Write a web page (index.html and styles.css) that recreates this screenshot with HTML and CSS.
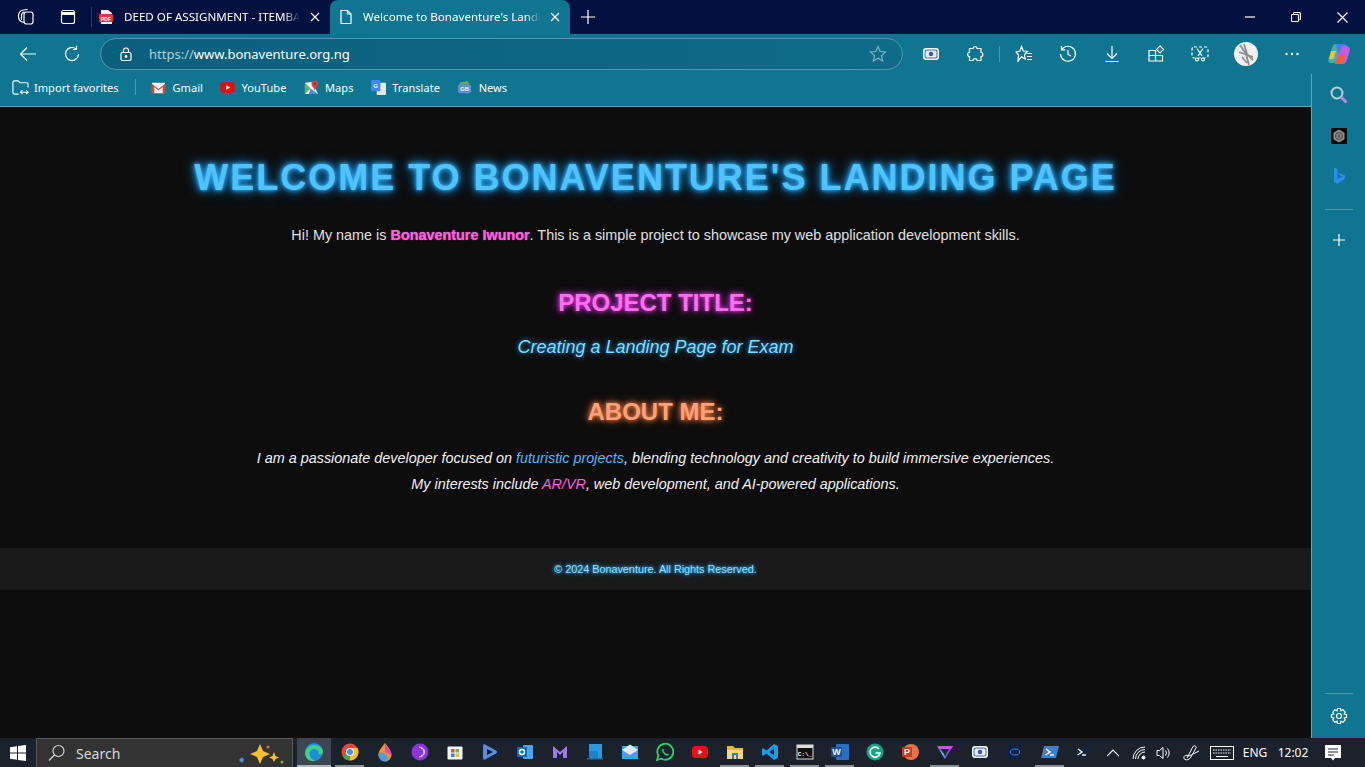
FILE: index.html
```html
<!DOCTYPE html>
<html lang="en">
<head>
<meta charset="utf-8">
<title>Welcome to Bonaventure's Landing Page</title>
<link rel="stylesheet" href="styles.css">
</head>
<body>
<div class="window">
  <header class="tabstrip">
    <span class="strip-btn first"><svg class="ic i18" viewBox="0 0 18 18"><rect x="7" y="4" width="9" height="12" rx="2.500"/><path d="M7 14.500C3.500 14 1.500 11.500 1.500 8C1.500 5 3.500 2.500 6.500 2L10.500 1.500"/><path d="M4.500 12V7.500C4.500 5.500 5.500 4.500 7.500 4"/></svg></span>
    <span class="strip-btn second"><svg class="ic i18" viewBox="0 0 18 18"><rect x="2.500" y="2.500" width="13" height="13" rx="2"/><path d="M2.500 5.500H15.500" stroke-width="3"/></svg></span>
    <span class="strip-sep"></span>
    <div class="tab">
      <svg class="fav16" viewBox="0 0 16 16"><path d="M3 1H10L14 4V15H3Z" fill="#f2f2f2"/><rect x="1" y="5" width="14" height="8" rx="1" fill="#e5333f"/><text x="8" y="11.500" class="pdf-txt" text-anchor="middle">PDF</text></svg>
      <span class="tab-title">DEED OF ASSIGNMENT - ITEMBA DEED</span>
      <svg class="ic i10" viewBox="0 0 10 10"><path d="M1 1L9 9M9 1L1 9"/></svg>
    </div>
    <div class="tab active">
      <svg class="ic i16" viewBox="0 0 16 16"><path d="M3 1.500H9.500L13 5V14.500H3ZM9.500 1.500V5H13"/></svg>
      <span class="tab-title">Welcome to Bonaventure's Landing Page</span>
      <svg class="ic i10" viewBox="0 0 10 10"><path d="M1 1L9 9M9 1L1 9"/></svg>
    </div>
    <span class="new-tab"><svg class="ic i14" viewBox="0 0 14 14"><path d="M7 0V14M0 7H14"/></svg></span>
    <div class="win-ctrl">
      <span class="ctl"><svg class="ic i10" viewBox="0 0 10 10"><path d="M0 5H10"/></svg></span>
      <span class="ctl"><svg class="ic i10" viewBox="0 0 10 10"><rect x="0.500" y="2.500" width="7" height="7" rx="1"/><path d="M2.500 2.500V1.500C2.500 1 3 .5 3.500 .5H8C9 .5 9.500 1 9.500 2V6.500C9.500 7 9 7.500 8.500 7.500"/></svg></span>
      <span class="ctl"><svg class="ic i11" viewBox="0 0 11 11"><path d="M.5 .5L10.500 10.500M10.500 .5L.5 10.500"/></svg></span>
    </div>
  </header>

  <nav class="toolbar">
    <span class="tb-nav"><svg class="ic i18" viewBox="0 0 18 18"><path d="M17 9H1.500M8 2.500L1.500 9L8 15.500"/></svg></span>
    <span class="tb-nav"><svg class="ic i18" viewBox="0 0 18 18"><path d="M15.500 9A6.500 6.500 0 1 1 13 3.900M13.500 .8V4.500H9.800"/></svg></span>
    <div class="address">
      <svg class="ic i14" viewBox="0 0 14 14"><rect x="2" y="5.500" width="10" height="8" rx="1.500"/><path d="M4.500 5.500V3.500A2.500 2.500 0 0 1 9.500 3.500V5.500"/><circle cx="7" cy="9.500" r=".8"/></svg>
      <span class="url"><span class="url-dim">https://</span>www.bonaventure.org.ng</span>
      <svg class="ic i18 star" viewBox="0 0 18 18"><path d="M9 1.500L11.200 6.500L16.500 7L12.500 10.600L13.700 16L9 13.200L4.300 16L5.500 10.600L1.500 7L6.800 6.500Z"/></svg>
    </div>
    <div class="tools">
      <span class="tool"><svg class="i18" viewBox="0 0 18 18"><rect x="1" y="3" width="16" height="12" rx="3" fill="#fff"/><rect x="2.500" y="4.500" width="13" height="9" rx="2" fill="#2f6fd8"/><rect x="3.500" y="5.500" width="11" height="7" rx="1.500" fill="#e8eefc"/><circle cx="9" cy="9" r="2.200" fill="#3c4fc0"/></svg></span>
      <span class="tool"><svg class="ic i18" viewBox="0 0 18 18"><path d="M7 3.500C7 1 11 1 11 3.500H15V7.500C17.500 7.500 17.500 11.500 15 11.500V15.500H11C11 13 7 13 7 15.500H3.500V11.500C1 11.500 1 7.500 3.500 7.500V3.500Z"/></svg></span>
      <span class="tool-sep"></span>
      <span class="tool"><svg class="ic i18" viewBox="0 0 18 18"><path d="M6.500 1.500L8.300 6L12.500 6.500L9.500 9.500L10.300 14L6.500 11.800L3 16L3.500 10L1 7L5 6Z"/><path d="M12 8.500H17M12 11.500H17M12 14.500H17"/></svg></span>
      <span class="tool"><svg class="ic i18" viewBox="0 0 18 18"><path d="M2.800 4.500A7.500 7.500 0 1 1 1.500 9M2.500 1V4.800H6.300M9 5V9.500L12 11"/></svg></span>
      <span class="tool"><svg class="ic i18" viewBox="0 0 18 18"><path d="M9 1V13M4 8.500L9 13.500L14 8.500M2.500 16.500H15.500"/></svg></span>
      <span class="tool"><svg class="ic i18" viewBox="0 0 18 18"><path d="M2 5.500H8.500V16H2ZM8.500 10.500H15.500V16H8.500ZM2 10.500H8.500"/><path d="M13 1L16.500 4.500L13 8L9.500 4.500Z"/></svg></span>
      <span class="tool"><svg class="ic i18 dash" viewBox="0 0 18 18"><rect x="1" y="2" width="16" height="11" rx="2"/><path class="solid" d="M6 3.500L11 11M12 3.500L7 11"/><circle class="solid" cx="6" cy="14.500" r="1.500"/><circle class="solid" cx="12" cy="14.500" r="1.500"/></svg></span>
      <span class="tool avatar-wrap"><svg class="avatar" viewBox="0 0 24 24"><circle cx="12" cy="12" r="12" fill="#f0f0f0"/><path d="M6 3L12 12L15 23M10 2L13 12L19 18M5 10L19 15M8 15L13 21" stroke="#8f8f8f" stroke-width="1.800" fill="none"/></svg></span>
      <span class="tool"><svg class="i18" viewBox="0 0 18 18"><circle cx="3.500" cy="9" r="1.200" fill="#fff"/><circle cx="9" cy="9" r="1.200" fill="#fff"/><circle cx="14.500" cy="9" r="1.200" fill="#fff"/></svg></span>
      <span class="tool copilot"><svg class="i24" viewBox="0 0 24 24"><path d="M9 2H15L10 18C9.500 20 8 21 6 21H4C2 21 1 19.500 1.500 17.500L5 6C5.700 3.500 7 2 9 2Z" fill="#3fb5a5"/><path d="M9 2H17C19 2 20 3 19.500 5L17 12H11Z" fill="#3f7fe8"/><path d="M15 4H19C21.500 4 23.500 6 22.800 8.500L20 18C19.400 20.500 17.500 22 15.500 22H8L11 13Z" fill="#c65be0"/><path d="M11 13H19L16.500 20C16 21.500 15 22 13.500 22H8Z" fill="#f2603a"/><path d="M4 9H9L6.500 17H2Z" fill="#e9c23a"/></svg></span>
    </div>
  </nav>

  <div class="body-row">
    <div class="left-col">
      <div class="favbar">
        <span class="fav import"><svg class="ic i18 fav-import" viewBox="0 0 18 18"><path d="M7 16H3A2 2 0 0 1 1 14V3.500A1.500 1.500 0 0 1 2.500 2H6.500L8.500 4H15.500A1.500 1.500 0 0 1 17 5.500V9"/><path d="M9 14H17M11 12L9 14L11 16M15 12L17 14L15 16"/></svg>Import favorites</span>
        <span class="fav-sep"></span>
        <span class="fav"><svg class="i15" viewBox="0 0 16 16"><rect x="1" y="3" width="14" height="11" rx="1" fill="#f3f3f3"/><path d="M1 4L8 9.500L15 4V14H12.500V7.500L8 11L3.500 7.500V14H1Z" fill="#d9453a"/></svg>Gmail</span>
        <span class="fav"><svg class="i15" viewBox="0 0 16 16"><rect x="0.500" y="2.500" width="15" height="11" rx="3" fill="#f00"/><path d="M6.500 5.500L11 8L6.500 10.500Z" fill="#fff"/></svg>YouTube</span>
        <span class="fav"><svg class="i15" viewBox="0 0 16 16"><path d="M1 3L9 2L15 15H1Z" fill="#f2f2f2"/><path d="M1 3L7 9L1 15Z" fill="#5cb85c"/><path d="M7 9L15 15H5Z" fill="#4a90e2"/><circle cx="11.500" cy="4" r="3.500" fill="#db4437"/><circle cx="11.500" cy="4" r="1.200" fill="#7d1f18"/><path d="M9 6L11.500 11L14 6Z" fill="#db4437"/></svg>Maps</span>
        <span class="fav"><svg class="i15" viewBox="0 0 16 16"><rect x="6" y="3" width="10" height="13" rx="1" fill="#e8e8e8"/><rect x="0" y="0" width="10" height="12" rx="1" fill="#4285f4"/><text x="5" y="9" class="mini-txt" text-anchor="middle">G</text></svg>Translate</span>
        <span class="fav"><svg class="i15" viewBox="0 0 16 16"><path d="M3 3L11 1L14 5H2Z" fill="#6aa84f"/><rect x="1" y="5" width="14" height="9" rx="2" fill="#5b8fd9"/><text x="8" y="12" class="mini-txt" text-anchor="middle">GB</text></svg>News</span>
      </div>
      <main class="page">
        <h1 class="hero">Welcome to Bonaventure's Landing Page</h1>
        <p class="intro">Hi! My name is <strong class="pink">Bonaventure Iwunor</strong>. This is a simple project to showcase my web application development skills.</p>
        <h2 class="project-h">Project Title:</h2>
        <p class="project-t">Creating a Landing Page for Exam</p>
        <h2 class="about-h">About Me:</h2>
        <p class="about-t">I am a passionate developer focused on <span class="blue">futuristic projects</span>, blending technology and creativity to build immersive experiences.<br>My interests include <span class="pink-i">AR/VR</span>, web development, and AI-powered applications.</p>
        <footer class="foot">© 2024 Bonaventure. All Rights Reserved.</footer>
      </main>
    </div>
    <aside class="sidebar">
      <div class="side-top">
        <span class="side-i"><svg class="i20" viewBox="0 0 20 20"><circle cx="8" cy="8" r="5.500" fill="none" stroke="#bcd0d6" stroke-width="2"/><path d="M12 12L17.500 17.500" stroke="#b78ae8" stroke-width="3"/></svg></span>
        <span class="side-i"><svg class="i20" viewBox="0 0 20 20"><rect x="2" y="2" width="16" height="16" fill="#0a0a0a"/><path d="M10 3.500L15.500 6.700V13.300L10 16.500L4.500 13.300V6.700Z" fill="#8d8d8d"/><circle cx="10" cy="10" r="3.500" fill="none" stroke="#444" stroke-width="1"/><circle cx="10" cy="10" r="1.500" fill="#555"/></svg></span>
        <span class="side-i"><svg class="i20" viewBox="0 0 20 20"><path d="M5 1.500L8.500 3V13L13 10.500L10.500 9.200L9.500 6.500L16 9.500V12.500L8.500 18L5 16Z" fill="#2b8cf0"/></svg></span>
        <span class="side-rule"></span>
        <span class="side-i plus"><svg class="ic i12" viewBox="0 0 12 12"><path d="M6 0V12M0 6H12"/></svg></span>
      </div>
      <div class="side-bottom">
        <span class="side-rule"></span>
        <span class="side-i"><svg class="ic i18" viewBox="0 0 18 18"><path d="M7.500 1.500H10.500L11 3.800L13 2.800L15.200 5L14.200 7L16.500 7.500V10.500L14.200 11L15.200 13L13 15.200L11 14.200L10.500 16.500H7.500L7 14.200L5 15.200L2.800 13L3.800 11L1.500 10.500V7.500L3.800 7L2.800 5L5 2.800L7 3.800Z"/><circle cx="9" cy="9" r="2.500"/></svg></span>
      </div>
    </aside>
  </div>

  <footer class="taskbar">
    <span class="start"><svg class="i18" viewBox="0 0 18 18"><path d="M1 3.200L8 2.200V8.500H1ZM9 2L17 1V8.500H9ZM1 9.500H8V15.800L1 14.800ZM9 9.500H17V17L9 16Z" fill="#fff"/></svg></span>
    <div class="search"><svg class="ic i18" viewBox="0 0 18 18"><circle cx="10.500" cy="7" r="5.500"/><path d="M6.500 11L1 16.500"/></svg><span>Search</span>
      <svg class="sparkle" viewBox="0 0 46 22"><path d="M22 2L25 9L32 12L25 15L22 22L19 15L12 12L19 9Z" fill="#f5c12e"/><path d="M36 10L37.500 14L41 15.500L37.500 17L36 20L34.500 17L31 15.500L34.500 14Z" fill="#f5c12e"/><path d="M4 15L6 18L4 21L1 18Z" fill="#3b9ad9"/><circle cx="30" cy="5" r="1.500" fill="#d9734a"/><circle cx="44" cy="20" r="1.500" fill="#7fb04a"/></svg>
    </div>
    <div class="apps">
      <span class="app on"><svg class="i20" viewBox="0 0 20 20"><circle cx="10" cy="10" r="9" fill="#1b8fd6"/><path d="M1 11C2 6 6 3 10 3C15 3 19 6 19 10C19 12 16 13 14 12C16 9 13 7 10 7C6 7 4 12 7 16C8 18 11 19 13 18.500C7 21 1 17 1 11Z" fill="#3fd08a"/></svg></span>
      <span class="app run"><svg class="i18" viewBox="0 0 18 18"><circle cx="9" cy="9" r="8.500" fill="#e6453a"/><path d="M9 9L1.500 13A8.500 8.500 0 0 0 9 17.500Z" fill="#3aa757"/><path d="M9 9L9 17.500A8.500 8.500 0 0 0 16.500 5H9Z" fill="#fbc02d"/><circle cx="9" cy="9" r="4" fill="#fff"/><circle cx="9" cy="9" r="3" fill="#4a8df0"/></svg></span>
      <span class="app"><svg class="i20" viewBox="0 0 20 20"><path d="M10 1C14 6 16.500 9 16.500 13A6.500 6.500 0 0 1 3.500 13C3.500 9 6 6 10 1Z" fill="#f09030"/><path d="M3.500 13C3.500 10 6 10 10 12C13 14 14 17 12 19A6.500 6.500 0 0 1 3.500 13Z" fill="#4a9de8"/><path d="M10 1C13 6 16.500 9 16.500 13L10 10Z" fill="#d84fb0"/></svg></span>
      <span class="app"><svg class="i18" viewBox="0 0 18 18"><circle cx="9" cy="9" r="8.500" fill="#8a35d8"/><path d="M8 4A5 5 0 0 1 8 14M10 5.500A3.500 3.500 0 0 1 10 12.500" fill="none" stroke="#e5c8f8" stroke-width="1.200"/></svg></span>
      <span class="app"><svg class="i18" viewBox="0 0 18 18"><rect x="1.500" y="3.500" width="15" height="13" rx="1" fill="#f5f5f5"/><rect x="5" y="6" width="3.500" height="3.500" fill="#e8503a"/><rect x="9.500" y="6" width="3.500" height="3.500" fill="#7cb342"/><rect x="5" y="10.500" width="3.500" height="3.500" fill="#2b8ae0"/><rect x="9.500" y="10.500" width="3.500" height="3.500" fill="#f5b82e"/></svg></span>
      <span class="app"><svg class="i18" viewBox="0 0 18 18"><path d="M4 1.500L15 7.500C16.500 8.500 16.500 9.500 15 10.500L4 16.500C3 17 2 16.500 2 15V3C2 1.500 3 1 4 1.500Z" fill="#5a8ee0"/><path d="M6 6L12 9L6 12Z" fill="#10182a"/></svg></span>
      <span class="app"><svg class="i18" viewBox="0 0 18 18"><rect x="7" y="2" width="10" height="14" rx="1" fill="#4aa8e8"/><rect x="1" y="4" width="10" height="10" rx="1" fill="#0f6cbd"/><circle cx="6" cy="9" r="2.500" fill="none" stroke="#fff" stroke-width="1.400"/></svg></span>
      <span class="app"><svg class="i18" viewBox="0 0 18 18"><path d="M2 3L9 9L16 3V15H12V9L9 12L6 9V15H2Z" fill="#9b7be8"/></svg></span>
      <span class="app"><svg class="i18" viewBox="0 0 18 18"><rect x="3" y="1" width="13" height="14" fill="#2a9be0"/><rect x="1" y="15" width="16" height="1.500" fill="#1c6eb0"/><rect x="3" y="8" width="9" height="7" fill="#1a82c8"/></svg></span>
      <span class="app"><svg class="i18" viewBox="0 0 18 18"><rect x="1" y="3" width="16" height="13" fill="#3ba4e8"/><path d="M1 7L9 1.500L17 7L9 12Z" fill="#d8ecfa"/></svg></span>
      <span class="app"><svg class="i18" viewBox="0 0 18 18"><path d="M1 17L2.300 12.500A8 8 0 1 1 5.500 15.700Z" fill="none" stroke="#25d366" stroke-width="1.800"/><path d="M6.500 5.500C5.500 7 6 9 8 11C10 13 12 13 13 12L11.500 10.500L10.500 11C9.500 10.500 8 9 7.500 8L8 7Z" fill="#25d366"/></svg></span>
      <span class="app"><svg class="i18" viewBox="0 0 18 18"><rect x="1" y="3" width="16" height="12" rx="3.500" fill="#e8101a"/><path d="M7.500 6.500L11.500 9L7.500 11.500Z" fill="#fff"/></svg></span>
      <span class="app run"><svg class="i18" viewBox="0 0 18 18"><path d="M1 3H7L9 5H17V16H1Z" fill="#e8b838"/><rect x="1" y="7" width="16" height="9" fill="#f5d878"/><rect x="6" y="10" width="6" height="6" fill="#3a78c8"/><rect x="8" y="12" width="2" height="4" fill="#f5d878"/></svg></span>
      <span class="app run"><svg class="i18" viewBox="0 0 18 18"><path d="M13 1L17 3V15L13 17L5.500 10.500L2 13L1 12V6L2 5L5.500 7.500ZM13 5.500L8.500 9L13 12.500Z" fill="#1d9be8"/></svg></span>
      <span class="app run"><svg class="i18" viewBox="0 0 18 18"><rect x="1" y="2" width="16" height="14" fill="#111" stroke="#ddd" stroke-width="1"/><rect x="1" y="2" width="16" height="3" fill="#ddd"/><text x="9" y="13" class="cmd-txt" text-anchor="middle">C:\_</text></svg></span>
      <span class="app run"><svg class="i18" viewBox="0 0 18 18"><rect x="5" y="1" width="13" height="16" rx="1" fill="#2b6fc4"/><rect x="0" y="4" width="11" height="10" rx="1" fill="#1a4fa0"/><text x="5.500" y="12" class="mini-txt big" text-anchor="middle">W</text></svg></span>
      <span class="app"><svg class="i18" viewBox="0 0 18 18"><circle cx="9" cy="9" r="8.500" fill="#11a683"/><path d="M13 6A5 5 0 1 0 14 10H9.500" fill="none" stroke="#fff" stroke-width="1.600"/></svg></span>
      <span class="app"><svg class="i18" viewBox="0 0 18 18"><circle cx="10" cy="9" r="8" fill="#e8734a"/><rect x="1" y="4" width="10" height="10" rx="1" fill="#c43e1c"/><text x="6" y="12" class="mini-txt big" text-anchor="middle">P</text></svg></span>
      <span class="app run"><svg class="i18" viewBox="0 0 18 18"><path d="M1 3H17L9 16Z" fill="#7b4fe0"/><path d="M5 6H13L9 13Z" fill="#1d2530"/><path d="M1 3H17L15 6H3Z" fill="#c05be0"/><path d="M3 6L9 16L8 11Z" fill="#3fd0c8"/></svg></span>
      <span class="app"><svg class="i18" viewBox="0 0 18 18"><rect x="1" y="3" width="16" height="12" rx="3" fill="#fff"/><rect x="2.500" y="4.500" width="13" height="9" rx="2" fill="#2f6fd8"/><rect x="3.500" y="5.500" width="11" height="7" rx="1.500" fill="#e8eefc"/><circle cx="9" cy="9" r="2.200" fill="#3c4fc0"/></svg></span>
      <span class="app"><svg class="i18" viewBox="0 0 18 18"><rect x="2" y="2" width="14" height="14" rx="3" fill="#0a2148"/><ellipse cx="9" cy="9" rx="4.500" ry="3" fill="none" stroke="#2f8fd8" stroke-width="1"/></svg></span>
      <span class="app run"><svg class="i18" viewBox="0 0 18 18"><path d="M3 3H18L15 15H0Z" fill="#3f7fd0"/><path d="M5 6L9 9L4.500 12" fill="none" stroke="#fff" stroke-width="1.400"/><path d="M9 12H13" stroke="#fff" stroke-width="1.400"/></svg></span>
      <span class="app narrow"><svg class="i18" viewBox="0 0 18 18"><path d="M3 3H18L15 15H0Z" fill="#16243a"/><path d="M5 6L9 9L4.500 12" fill="none" stroke="#fff" stroke-width="1.400"/><path d="M9 12H13" stroke="#fff" stroke-width="1.400"/></svg></span>
    </div>
    <div class="tray">
      <span class="tray-i w-chev"><svg class="ic i12" viewBox="0 0 12 12"><path d="M0 9L6 3L12 9"/></svg></span>
      <span class="tray-i w-wifi"><svg class="ic i14 thin" viewBox="0 0 14 14"><path d="M1 13A12 12 0 0 1 13 1M3.500 13A9.500 9.500 0 0 1 13 3.500M6 13A7 7 0 0 1 13 6"/><circle cx="11.500" cy="11.500" r="1.500" fill="#fff"/></svg></span>
      <span class="tray-i w-vol"><svg class="ic i16 thin" viewBox="0 0 16 16"><path d="M1 5.500H3.500L7 2.500V13.500L3.500 10.500H1ZM9.500 5.500A4 4 0 0 1 9.500 10.500M11.500 3.500A7 7 0 0 1 11.500 12.500"/></svg></span>
      <span class="tray-i w-pen"><svg class="ic i18 thin" viewBox="0 0 18 18"><path d="M5 14L11 2.500C12 1 14.500 2 14 4L9 13C7.500 15.500 5 16.500 3 15.500C.5 14 2.500 10.500 5 11.500C7 12.500 9 11 11 10L17 7"/></svg></span>
      <span class="tray-i w-kbd"><svg class="i24" viewBox="0 0 24 14"><rect x=".5" y=".5" width="23" height="13" fill="none" stroke="#fff"/><path d="M3 4H21M3 7H21" stroke="#fff" stroke-dasharray="1.500 1"/><path d="M6 10.500H18" stroke="#fff"/></svg></span>
      <span class="tray-t w-eng">ENG</span>
      <span class="tray-t w-time">12:02</span>
      <span class="tray-i w-note"><svg class="i18" viewBox="0 0 18 18"><path d="M1 1H17V14H11L9 16.500L7 14H1Z" fill="#fff"/><path d="M4 5H14M4 8H14M4 11H10" stroke="#1a2129"/></svg></span>
    </div>
  </footer>
</div>
</body>
</html>
```

FILE: styles.css
```css
* { box-sizing: border-box; }
html, body { margin: 0; height: 100%; overflow: hidden; background: #0d0d0d; }
.window { display: flex; flex-direction: column; width: 1365px; height: 767px; font-family: "Noto Sans", sans-serif; color: #fff; }

.ic { fill: none; stroke: currentColor; stroke-width: 1.2; flex: none; }
.thin { stroke-width: 1; }
.i10 { width: 10px; height: 10px; flex: none; }
.i11 { width: 11px; height: 11px; flex: none; }
.i12 { width: 12px; height: 12px; flex: none; }
.i14 { width: 14px; height: 14px; flex: none; }
.i15 { width: 15px; height: 15px; flex: none; }
.i16 { width: 16px; height: 16px; flex: none; }
.i18 { width: 18px; height: 18px; flex: none; }
.i20 { width: 20px; height: 20px; flex: none; }
.i24 { width: 24px; height: 24px; flex: none; }
.fav16 { width: 16px; height: 16px; flex: none; }
.pdf-txt { font: 700 5px "Liberation Sans", sans-serif; fill: #fff; }
.mini-txt { font: 700 6px "Liberation Sans", sans-serif; fill: #fff; }
.mini-txt.big { font-size: 9px; }
.cmd-txt { font: 700 6px "Liberation Mono", monospace; fill: #fff; }

.tabstrip { display: flex; align-items: center; height: 34px; flex: none; background: #02113f; }
.strip-btn { display: flex; justify-content: center; }
.strip-btn.first { width: 47px; margin-left: 2px; margin-right: 1px; }
.strip-btn.second { width: 36px; margin-right: 5px; }
.strip-sep { width: 1px; height: 20px; background: #2b3a66; margin-right: 5px; }
.tab { display: flex; align-items: center; gap: 10px; width: 233px; height: 34px; padding: 0 10px 0 1px; font-size: 11.6px; }
.tab.active { background: #0f7591; border-radius: 8px 8px 0 0; width: 240px; padding: 0 10px 0 8px; gap: 9px; }
.tab-title { flex: 1; min-width: 0; white-space: nowrap; overflow: hidden; padding-bottom: 1px; -webkit-mask-image: linear-gradient(90deg, #000 91%, transparent); mask-image: linear-gradient(90deg, #000 91%, transparent); }
.new-tab { width: 36px; display: flex; justify-content: center; }
.win-ctrl { margin-left: auto; display: flex; }
.ctl { width: 46px; display: flex; justify-content: center; }

.toolbar { display: flex; align-items: center; height: 40px; flex: none; background: #0f7591; padding-left: 6px; }
.tb-nav { width: 44px; display: flex; justify-content: center; }
.address { display: flex; align-items: center; gap: 16px; width: 803px; height: 32px; margin-left: 6px; padding: 0 15px 0 18px; border: 1px solid #4f97ac; border-radius: 16px; background: linear-gradient(90deg, #0b5f7c, #0e6c89); }
.url { flex: 1; font-size: 13px; }
.url-dim { color: #b3d0da; }
.star { color: #7fb0c0; }
.tools { display: flex; align-items: center; margin-left: 6px; }
.tool { width: 44px; display: flex; justify-content: center; align-items: center; }
.tool-sep { width: 1px; height: 16px; background: #4f97ac; margin: 0 2px; }
.dash rect { stroke-dasharray: 3 2; }
.avatar-wrap { margin: 0 2px; }
.avatar { width: 24px; height: 24px; }
.copilot { margin-left: 3px; }

.body-row { display: flex; flex: 1; min-height: 0; }
.left-col { display: flex; flex-direction: column; flex: 1; min-width: 0; }
.favbar { display: flex; align-items: center; gap: 17.2px; height: 33px; flex: none; padding: 0 0 6px 12px; background: #0f7591; border-bottom: 1px solid #64a3b6; font-size: 11px; letter-spacing: .05px; }
.fav { display: flex; align-items: center; gap: 6.5px; white-space: nowrap; }
.fav.import { gap: 5px; }
.fav-import { width: 17px; height: 17px; }
.fav-sep { width: 1px; height: 16px; background: #4f97ac; margin: 0 -2px 0 -1px; }

.page { flex: 1; background: #0d0d0d; font-family: "Liberation Sans", Arial, sans-serif; text-align: center; color: #e0e0e0; padding-top: 50px; }
.hero { margin: 0; font-size: 36px; font-weight: 700; line-height: 42px; text-transform: uppercase; letter-spacing: 2px; color: #4fc3ff; text-shadow: 0 0 4px #3db8ff, 0 0 9px #1e90d8, 0 0 14px #0a78c0; }
.intro { margin: 27px 0 0; font-size: 14.4px; line-height: 18px; }
.pink { color: #ff5ce0; font-weight: 700; text-shadow: 0 0 1px #ff5ce0; }
.project-h { margin: 45px 0 0; font-size: 24px; line-height: 28px; text-transform: uppercase; color: #ff6ef0; text-shadow: 0 0 4px #f03ce0, 0 0 9px #b02ac8; }
.project-t { margin: 19px 0 0; font-size: 18px; line-height: 22px; font-style: italic; color: #7fdcff; text-shadow: 0 0 5px #33aaff; }
.about-h { margin: 40px 0 0; font-size: 24px; line-height: 28px; text-transform: uppercase; color: #ffa07a; text-shadow: 0 0 5px #ff8a50, 0 0 10px #c85a20; }
.about-t { margin: 19px 0 0; font-size: 14.4px; line-height: 26px; font-style: italic; color: #f2f2f2; }
.blue { color: #4db8ff; }
.pink-i { color: #ff5ce0; }
.foot { margin-top: 51px; height: 42px; line-height: 42px; background: #1a1a1a; font-size: 10.8px; color: #8fe4ff; text-shadow: 0 0 3px #33aaff, 0 0 5px #33aaff; }

.sidebar { display: flex; flex-direction: column; justify-content: space-between; width: 54px; flex: none; background: #0f7591; border-left: 1px solid #64a3b6; }
.side-top, .side-bottom { display: flex; flex-direction: column; align-items: center; }
.side-top { padding-top: 1px; }
.side-i { width: 100%; height: 40.5px; display: flex; justify-content: center; align-items: center; }
.side-rule { width: 28px; height: 1px; background: #4f97ac; }
.side-top .side-rule { margin-top: 12px; }
.plus { margin-top: 10px; }
.side-bottom .side-i { height: 44px; }

.taskbar { display: flex; align-items: center; height: 29px; flex: none; background: #1b222b; }
.start { width: 36px; display: flex; justify-content: center; }
.search { display: flex; align-items: center; gap: 10px; width: 257px; height: 29px; padding: 0 8px 0 11px; background: #333; border: 1px solid #5a5a5a; border-bottom: 0; font-size: 14px; color: #d8d8d8; }
.search span { flex: 1; }
.sparkle { width: 46px; height: 22px; }
.apps { display: flex; margin-left: 4px; }
.app { width: 35px; height: 29px; display: flex; justify-content: center; align-items: center; border-bottom: 2px solid transparent; }
.app.on { background: #3c4650; border-bottom-color: #aeb4ba; width: 34px; margin-right: 1px; }
.app.run { border-image: linear-gradient(90deg, transparent 4px, #8b9096 4px, #8b9096 calc(100% - 4px), transparent calc(100% - 4px)) 1; }
.app.narrow { width: 30px; }
.tray { display: flex; align-items: center; margin-left: auto; font-size: 12px; }
.tray-i { display: flex; justify-content: center; }
.w-chev { width: 26px; }
.w-wifi { width: 26px; }
.w-vol { width: 23px; }
.w-pen { width: 32px; }
.w-kbd { width: 29px; }
.tray-t { text-align: center; }
.w-eng { width: 38px; }
.w-time { width: 38px; }
.w-note { width: 42px; margin-right: 11px; }
```
